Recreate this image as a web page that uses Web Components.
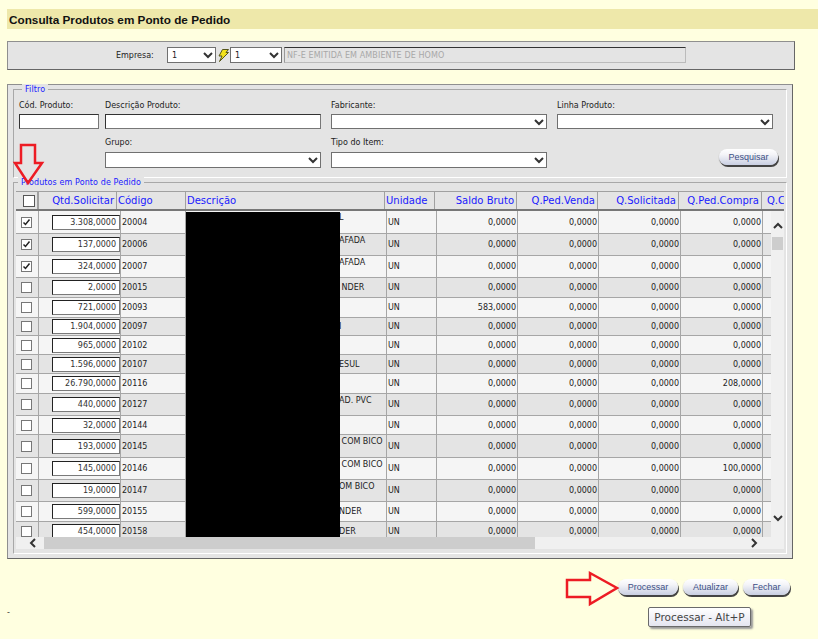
<!DOCTYPE html>
<html>
<head>
<meta charset="utf-8">
<title>Consulta Produtos em Ponto de Pedido</title>
<style>
html, body { margin: 0; padding: 0; background: #ffffe0; }
body { font: 8px "DejaVu Sans", sans-serif; color: #222; overflow: hidden; }
</style>
</head>
<body>
<consulta-page></consulta-page>

<script>
const CHEVRON = (w, h, d) => `<svg width="${w}" height="${h}" viewBox="0 0 10 10" fill="none" stroke="#333" stroke-width="2"><path d="${d}"/></svg>`;
const CHEVRON_DOWN = CHEVRON(10, 10, "M1 3 L5 7 L9 3");
const CHEVRON_UP = CHEVRON(10, 10, "M1 7 L5 3 L9 7");
const CHEVRON_LEFT = CHEVRON(10, 10, "M7 1 L3 5 L7 9");
const CHEVRON_RIGHT = CHEVRON(10, 10, "M3 1 L7 5 L3 9");

class TitleBar extends HTMLElement {
    constructor() {
        super();
        this.attachShadow({mode: 'open'}).innerHTML = `
<style>
:host {
    display: flex;
    align-items: center;
    height: 20px;
    margin-left: 7px;
    padding-left: 2px;
    background: #eee8aa;
    font: bold 11.75px "Liberation Sans", sans-serif;
    color: #111;
}
</style>
<slot></slot>`;
    }
}

class GrayPanel extends HTMLElement {
    constructor() {
        super();
        this.attachShadow({mode: 'open'}).innerHTML = `
<style>
:host {
    display: block;
    box-sizing: border-box;
    background: #e4e4e4;
    border: 1px solid #8f8f8f;
    border-right-color: #666;
    border-bottom-color: #666;
}
</style>
<slot></slot>`;
    }
}

class GroupBox extends HTMLElement {
    static get observedAttributes() { return ["legend"]; }
    constructor() {
        super();
        this.attachShadow({mode: 'open'}).innerHTML = `
<style>
:host {
    display: block;
    position: relative;
    box-sizing: border-box;
    border: 1px solid #a8a8a8;
    border-right-color: #fff;
    border-bottom-color: #fff;
}
#legend {
    position: absolute;
    top: -6px;
    left: var(--legend-left, 10px);
    padding: 0 3px;
    background: #e4e4e4;
    color: #1a1aff;
    font: 8px/11px "DejaVu Sans", sans-serif;
    letter-spacing: 0.1px;
    white-space: nowrap;
}
</style>
<span id="legend"></span>
<slot></slot>`;
    }
    attributeChangedCallback(name, old, val) {
        this.shadowRoot.getElementById("legend").textContent = val;
    }
}

class FormField extends HTMLElement {
    constructor() {
        super();
        this.attachShadow({mode: 'open'}).innerHTML = `
<style>
:host {
    display: flex;
    flex-direction: column;
    justify-content: flex-end;
    gap: 3px;
    font: 8px/11px "DejaVu Sans", sans-serif;
    color: #222;
}
</style>
<span id="label"></span>
<slot></slot>`;
        this.shadowRoot.getElementById("label").textContent = this.getAttribute("label");
    }
}

class TextBox extends HTMLElement {
    constructor() {
        super();
        this.attachShadow({mode: 'open'}).innerHTML = `
<style>
:host {
    display: flex;
    align-items: center;
    box-sizing: border-box;
    height: 15px;
    background: #fff;
    border: 1px solid #7a7a7a;
    border-top-color: #222;
    border-left-color: #222;
    font: 8px "DejaVu Sans", sans-serif;
    color: #333;
}
:host([align=right]) { justify-content: flex-end; padding-right: 3px; }
:host([disabled]) {
    background: #e4e4e4;
    color: #a8a8a8;
    padding-left: 2px;
    letter-spacing: 0.1px;
    border-color: #bbb;
    border-top-color: #333;
    border-left-color: #999;
}
:host([light]) { border-top-color: #333; border-left-color: #333; border-right-color: #777; border-bottom-color: #777; }
</style>
<slot></slot>`;
    }
}

class SelectBox extends HTMLElement {
    constructor() {
        super();
        this.attachShadow({mode: 'open'}).innerHTML = `
<style>
:host {
    display: flex;
    align-items: center;
    justify-content: space-between;
    box-sizing: border-box;
    height: 15px;
    padding: 0 2px 0 4px;
    background: #fff;
    border: 1px solid #707070;
    font: 8px "DejaVu Sans", sans-serif;
    color: #222;
}
svg { flex: none; }
</style>
<span><slot></slot></span>${CHEVRON_DOWN}`;
    }
}

class PillButton extends HTMLElement {
    constructor() {
        super();
        this.attachShadow({mode: 'open'}).innerHTML = `
<style>
:host {
    display: inline-flex;
    align-items: center;
    justify-content: center;
    box-sizing: border-box;
    height: 16px;
    border-radius: 8px;
    background: linear-gradient(#ffffff 0, #f4f4f8 35%, #c9cfe2 100%);
    box-shadow: 1px 2px 0 #444, 0 1px 1px #777;
    font: 9px "Liberation Sans", sans-serif;
    color: #3c4f86;
    cursor: pointer;
}
</style>
<slot></slot>`;
    }
}

class CheckMark extends HTMLElement {
    constructor() {
        super();
        this.attachShadow({mode: 'open'}).innerHTML = `
<style>
:host {
    display: block;
    box-sizing: border-box;
    width: 11px;
    height: 11px;
    background: #fff;
    border: 1px solid #777;
}
:host([head]) { border-color: #555; width: 12px; height: 12px; }
svg { display: block; }
</style>
${this.hasAttribute("checked") ? '<svg width="9" height="9" viewBox="0 0 9 9" fill="none" stroke="#222" stroke-width="1.5"><path d="M1.5 4.5 L3.5 6.5 L7.5 1.5"/></svg>' : ""}`;
    }
}

const HEAD_COLS = [
    ["", 23], ["Qtd.Solicitar", 78, "r"], ["Código", 69], ["Descrição", 199], ["Unidade", 50],
    ["Saldo Bruto", 82, "r"], ["Q.Ped.Venda", 81, "r"], ["Q.Solicitada", 81, "r"], ["Q.Ped.Compra", 83, "r"], ["Q.C", 22]
];

// height, qtd, codigo, resto da descricao, saldo, q.ped.compra, marcado, topo
const ROWS = [
    [23, "3.308,0000", "20004", "L", "0,0000", "0,0000", 1, 1],
    [22, "137,0000", "20006", "AFADA", "0,0000", "0,0000", 1, 1],
    [22, "324,0000", "20007", "AFADA", "0,0000", "0,0000", 1, 1],
    [20, "2,0000", "20015", " NDER", "0,0000", "0,0000", 0, 0],
    [20, "721,0000", "20093", "", "583,0000", "0,0000", 0, 0],
    [18, "1.904,0000", "20097", "I", "0,0000", "0,0000", 0, 0],
    [19, "965,0000", "20102", "", "0,0000", "0,0000", 0, 0],
    [19, "1.596,0000", "20107", "ESUL", "0,0000", "0,0000", 0, 0],
    [20, "26.790,0000", "20116", "", "0,0000", "208,0000", 0, 0],
    [22, "440,0000", "20127", "AD. PVC", "0,0000", "0,0000", 0, 1],
    [19, "32,0000", "20144", "", "0,0000", "0,0000", 0, 0],
    [23, "193,0000", "20145", " COM BICO", "0,0000", "0,0000", 0, 1],
    [22, "145,0000", "20146", " COM BICO", "0,0000", "100,0000", 0, 1],
    [22, "19,0000", "20147", "OM BICO", "0,0000", "0,0000", 0, 1],
    [20, "599,0000", "20155", "NDER", "0,0000", "0,0000", 0, 0],
    [20, "454,0000", "20158", "DER", "0,0000", "0,0000", 0, 0]
];

class GridRow extends HTMLElement {
    constructor() {
        super();
        this.attachShadow({mode: 'open'}).innerHTML = `
<style>
:host {
    display: grid;
    grid-template-columns: 23px 82px 65px 201px 50px 81px 81px 82px 82px 8px;
    box-sizing: border-box;
    border-bottom: 1px solid #a6a6a6;
    background: #f5f5f5;
    font: 8px "DejaVu Sans", sans-serif;
    color: #222;
}
:host([alt]) { background: #e4e4e4; }
.c {
    display: flex;
    align-items: center;
    box-sizing: border-box;
    border-right: 1px solid #a6a6a6;
    padding: 0 1px;
    overflow: hidden;
    white-space: nowrap;
}
.num { justify-content: flex-end; padding-right: 1px; }
.chk { padding-left: 5px; }
.qtd { padding: 0 0 0 13px; }
::slotted(text-box) { flex: 1; }
.desc { padding-left: 153px; align-items: center; }
.desc.top { align-items: flex-start; padding-top: 2px; }
.un { padding-left: 1px; }
</style>
<div class="c chk"><slot name="chk"></slot></div>
<div class="c qtd"><slot name="qtd"></slot></div>
<div class="c" id="cod"></div>
<div class="c desc" id="desc"></div>
<div class="c un">UN</div>
<div class="c num" id="saldo"></div>
<div class="c num">0,0000</div>
<div class="c num">0,0000</div>
<div class="c num" id="compra"></div>
<div></div>`;
    }
    fill(r, alt) {
        let root = this.shadowRoot;
        this.style.height = r[0] + "px";
        if (alt) this.setAttribute("alt", "");
        root.getElementById("cod").textContent = r[2];
        root.getElementById("desc").textContent = r[3];
        root.getElementById("desc").style.whiteSpace = "pre";
        if (r[7]) root.getElementById("desc").classList.add("top");
        root.getElementById("saldo").textContent = r[4];
        root.getElementById("compra").textContent = r[5];
        this.innerHTML = `<check-mark slot="chk" ${r[6] ? "checked" : ""}></check-mark>
<text-box slot="qtd" align="right">${r[1]}</text-box>`;
    }
}

class DataGrid extends HTMLElement {
    constructor() {
        super();
        let head = HEAD_COLS.map((c, i) => {
            if (i === 0) return `<div class="h first" style="width:${c[1]}px"><check-mark head></check-mark></div>`;
            return `<div class="h ${c[2] === "r" ? "r" : ""}" style="width:${c[1]}px">${c[0]}</div>`;
        }).join("");
        this.attachShadow({mode: 'open'}).innerHTML = `
<style>
:host {
    display: block;
    position: relative;
    width: 768px;
    font: 8px "DejaVu Sans", sans-serif;
}
#head {
    display: flex;
    height: 20px;
    box-sizing: border-box;
    border-top: 1px solid #a0a0a0;
    border-bottom: 2px solid #777;
    background: #e4e4e4;
    overflow: hidden;
}
.h {
    flex: none;
    display: flex;
    align-items: center;
    box-sizing: border-box;
    padding: 0 2px 0 1px;
    border-right: 1px solid #a0a0a0;
    font-size: 10px;
    color: #1a1aff;
    white-space: nowrap;
    overflow: hidden;
}
.h:last-child { border-right: 0; padding: 0 0 0 5px; }
.h.r { justify-content: flex-end; }
.h.first { padding-left: 7px; border-right: 2px solid #a0a0a0; }
#mid { display: flex; height: 326px; }
#rows { width: 755px; height: 326px; overflow: hidden; background: #f0f0f0; }
#rows grid-row { width: 755px; }
#vbar {
    width: 13px;
    background: #f0f0f0;
    display: flex;
    flex-direction: column;
    align-items: center;
}
#up { margin-top: 10px; height: 11px; }
#vthumb { width: 11px; height: 13px; margin-top: 5px; background: #cdcdcd; }
#down { margin-top: auto; margin-bottom: 14px; height: 10px; }
#hbar {
    display: flex;
    align-items: center;
    height: 12px;
    background: #f0f0f0;
}
#left { width: 28px; padding-left: 12px; box-sizing: border-box; height: 10px; }
#hthumb { width: 491px; height: 12px; background: #cdcdcd; }
#right { margin-left: 214px; height: 10px; }
#redacted {
    position: absolute;
    left: 170px;
    top: 21px;
    width: 154px;
    height: 325px;
    background: #000;
}
svg { display: block; }
</style>
<div id="head">${head}</div>
<div id="mid">
    <div id="rows"></div>
    <div id="vbar">
        <div id="up">${CHEVRON_UP}</div>
        <div id="vthumb"></div>
        <div id="down">${CHEVRON_DOWN}</div>
    </div>
</div>
<div id="hbar">
    <div id="left">${CHEVRON_LEFT}</div>
    <div id="hthumb"></div>
    <div id="right">${CHEVRON_RIGHT}</div>
</div>
<div id="redacted"></div>`;
    }
    connectedCallback() {
        let rows = this.shadowRoot.getElementById("rows");
        ROWS.forEach((r, i) => {
            let row = document.createElement("grid-row");
            rows.appendChild(row);
            row.fill(r, i % 2 === 1);
        });
    }
}

class ToolTip extends HTMLElement {
    constructor() {
        super();
        this.attachShadow({mode: 'open'}).innerHTML = `
<style>
:host {
    display: flex;
    align-items: center;
    justify-content: center;
    box-sizing: border-box;
    position: absolute;
    left: 648px;
    top: 607px;
    width: 103px;
    height: 20px;
    background: linear-gradient(#fff, #e4e5f0);
    border: 1px solid #6a6a6a;
    border-radius: 2px;
    box-shadow: 2px 2px 2px #999;
    font: 10.5px "DejaVu Sans", sans-serif;
    color: #444;
}
</style>
<slot></slot>`;
    }
}

class ConsultaPage extends HTMLElement {
    constructor() {
        super();
        this.attachShadow({mode: 'open'}).innerHTML = `
<style>
:host {
    display: block;
    position: relative;
    height: 639px;
    padding-top: 9px;
    box-sizing: border-box;
}
#empresa {
    width: 788px;
    height: 29px;
    margin: 12px 0 0 7px;
    padding: 5px 0 0 108px;
    box-sizing: border-box;
}
.emp { display: flex; align-items: center; height: 16px; font-size: 8px; color: #222; }
.emp .lbl { width: 51px; }
.emp select-box { height: 16px; }
.emp svg { display: block; margin: 0 1px 0 2px; flex: none; }
#main {
    width: 786px;
    height: 475px;
    margin: 14px 0 0 7px;
    padding: 4px 0 0 5px;
    box-sizing: border-box;
}
#filtro {
    width: 774px;
    height: 89px;
    padding: 10px 0 0 5px;
    --legend-left: 8px;
}
.fields {
    display: grid;
    grid-template-columns: 86px 226px 226px 216px;
    grid-template-rows: 29px 39px;
}
.gap6 { margin-right: 6px; }
.gap10 { margin-right: 10px; }
.row2 { gap: 4px; }
.btn-cell {
    display: flex;
    justify-content: flex-end;
    align-items: flex-end;
    padding-bottom: 3px;
    margin-right: -5px;
}
#produtos {
    width: 774px;
    height: 372px;
    margin-top: 4px;
    padding: 8px 0 0 2px;
    --legend-left: 4px;
}
#footer {
    display: flex;
    justify-content: flex-end;
    gap: 5px;
    width: 790px;
    margin-top: 20px;
}
#dash { position: absolute; left: 7px; top: 608px; font: 8px "DejaVu Sans", sans-serif; color: #333; }
.arrow { position: absolute; overflow: visible; }
</style>
<title-bar>Consulta Produtos em Ponto de Pedido</title-bar>

<gray-panel id="empresa">
    <div class="emp">
        <span class="lbl">Empresa:</span>
        <select-box style="width:49px">1</select-box>
        <svg width="11" height="13" viewBox="0 0 11 13"><path d="M4.5 0.5 L10.5 0.5 L8 3.5 L10.5 3.5 L1.5 12.5 L4 7 L1 7 Z" fill="#f2e21c" stroke="#55551a" stroke-width="1"/></svg>
        <select-box style="width:52px">1</select-box>
        <text-box disabled style="width:402px;height:16px;margin-left:2px">NF-E EMITIDA EM AMBIENTE DE HOMO</text-box>
    </div>
</gray-panel>

<gray-panel id="main">
    <group-box id="filtro" legend="Filtro">
        <div class="fields">
            <form-field class="gap6" label="Cód. Produto:"><text-box light></text-box></form-field>
            <form-field class="gap10" label="Descrição Produto:"><text-box light></text-box></form-field>
            <form-field class="gap10" label="Fabricante:"><select-box></select-box></form-field>
            <form-field label="Linha Produto:"><select-box></select-box></form-field>
            <div></div>
            <form-field class="gap10 row2" label="Grupo:"><select-box style="height:16px"></select-box></form-field>
            <form-field class="gap10 row2" label="Tipo do Item:"><select-box style="height:16px"></select-box></form-field>
            <div class="btn-cell"><pill-button style="width:59px">Pesquisar</pill-button></div>
        </div>
    </group-box>
    <group-box id="produtos" legend="Produtos em Ponto de Pedido">
        <data-grid></data-grid>
    </group-box>
</gray-panel>

<div id="footer">
    <pill-button style="width:60px">Processar</pill-button>
    <pill-button style="width:55px">Atualizar</pill-button>
    <pill-button style="width:47px">Fechar</pill-button>
</div>

<span id="dash">-</span>

<svg class="arrow" style="left:13px;top:144px" width="31" height="41" viewBox="0 0 31 41" fill="none" stroke="#ed1c24" stroke-width="2.5">
    <path d="M8 1 H22 V19 H29 L15 39 L2 19 H8 Z"/>
</svg>
<svg class="arrow" style="left:565px;top:571px" width="54" height="35" viewBox="0 0 54 35" fill="none" stroke="#ed1c24" stroke-width="2.5">
    <path d="M2 9 H25 V2 L52 17 L25 33 V26 H2 Z"/>
</svg>

<tool-tip>Processar - Alt+P</tool-tip>`;
    }
}

window.customElements.define("title-bar", TitleBar);
window.customElements.define("gray-panel", GrayPanel);
window.customElements.define("group-box", GroupBox);
window.customElements.define("form-field", FormField);
window.customElements.define("text-box", TextBox);
window.customElements.define("select-box", SelectBox);
window.customElements.define("pill-button", PillButton);
window.customElements.define("check-mark", CheckMark);
window.customElements.define("grid-row", GridRow);
window.customElements.define("data-grid", DataGrid);
window.customElements.define("tool-tip", ToolTip);
window.customElements.define("consulta-page", ConsultaPage);
</script>
</body>
</html>
